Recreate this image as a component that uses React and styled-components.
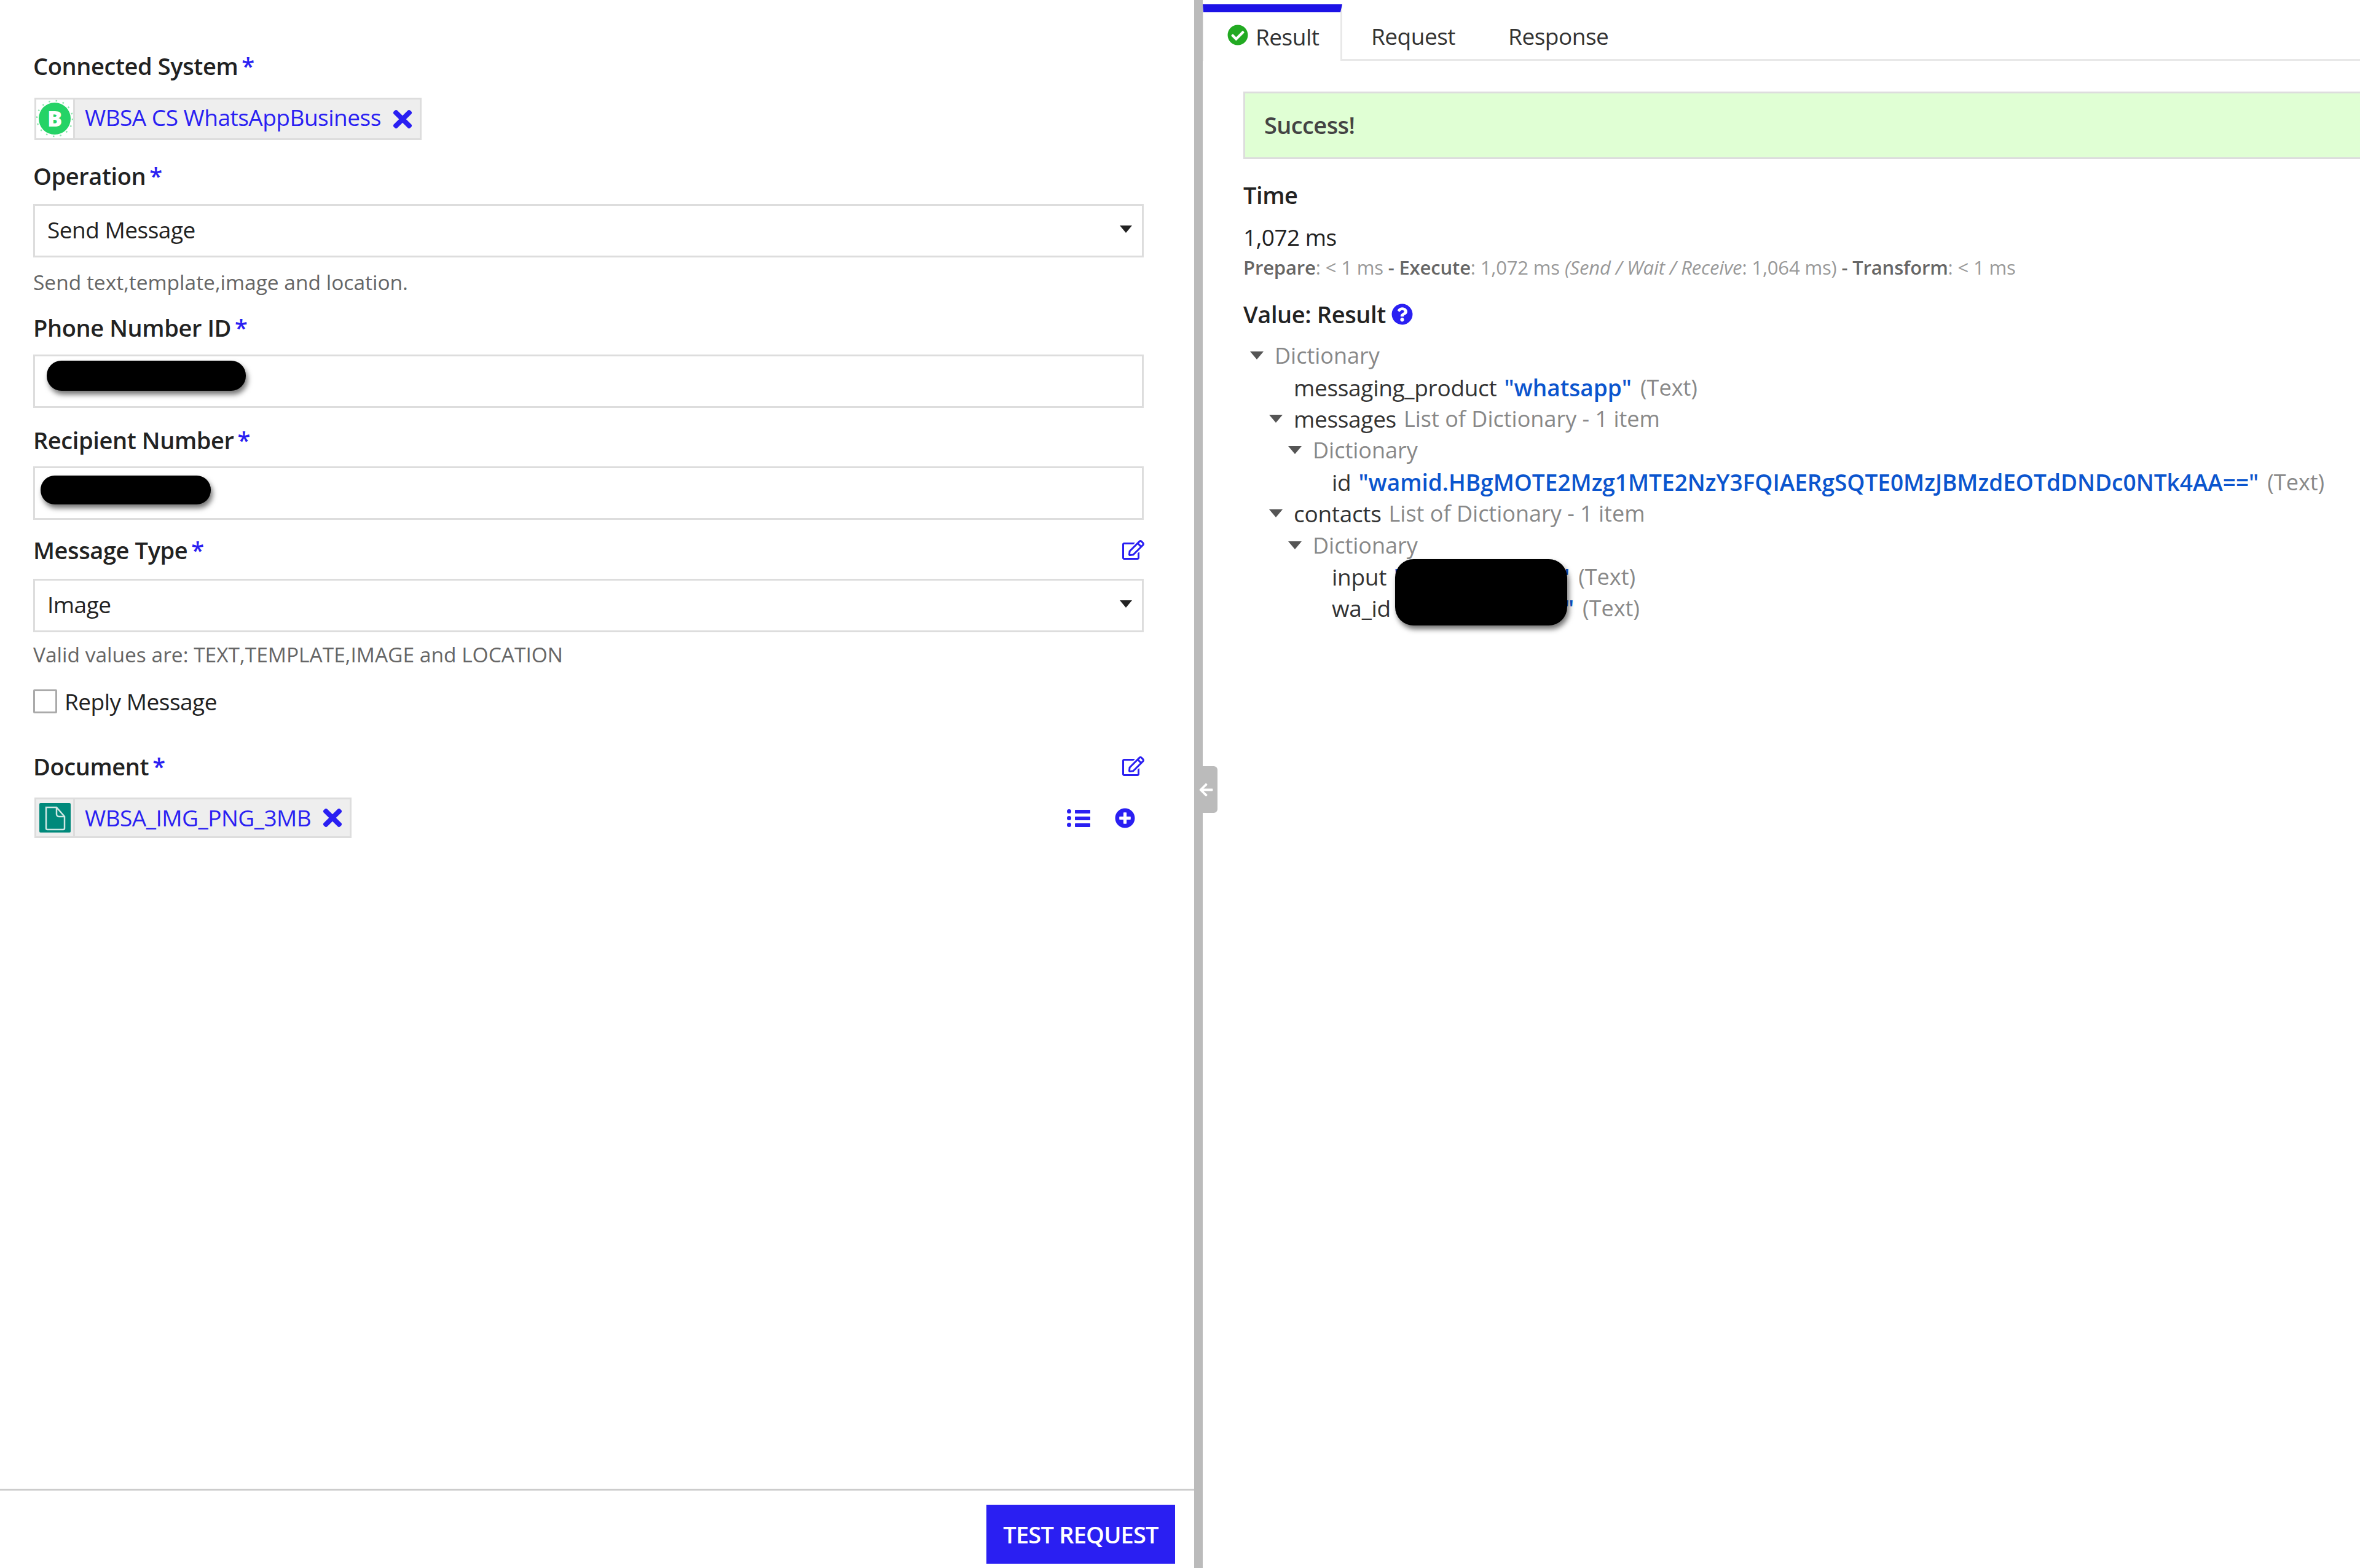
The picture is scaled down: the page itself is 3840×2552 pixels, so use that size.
import styled, { createGlobalStyle } from 'styled-components';
import { FaRegEdit, FaPlusCircle, FaTimes, FaCheckCircle, FaQuestionCircle, FaArrowLeft } from 'react-icons/fa';

const BLUE = '#2a1ff2';

const GlobalStyle = createGlobalStyle`
    html, body {
        margin: 0;
        padding: 0;
        background: #ffffff;
    }
    body {
        font-family: "Open Sans", "Noto Sans", "Liberation Sans", sans-serif;
        font-size: 37px;
        letter-spacing: -0.5px;
        color: #222222;
    }
`;

const Page = styled.div`
    display: flex;
    width: 3840px;
    height: 2552px;
    overflow: hidden;
`;

const LeftPane = styled.div`
    display: flex;
    flex-direction: column;
    width: 1943px;
    flex-shrink: 0;
`;

const Form = styled.div`
    flex: 1;
    padding: 82px 82px 0 54px;
`;

const LabelRow = styled.div`
    display: flex;
    align-items: center;
    justify-content: space-between;
    height: 50px;
    margin-top: ${({ $top }) => $top || 0}px;
    margin-right: -1px;
    color: ${BLUE};
`;

const Label = styled.span`
    font-weight: 600;
    font-size: 38px;
    letter-spacing: -0.4px;
    color: #222222;
`;

const Star = styled.span`
    color: ${BLUE};
    margin-left: 6px;
`;

const Chip = styled.div`
    display: flex;
    align-items: center;
    width: fit-content;
    height: ${({ $height }) => $height}px;
    box-sizing: border-box;
    margin-top: ${({ $top }) => $top || 0}px;
    margin-left: 2px;
    background: #eeeeee;
    border: 3px solid #dddddd;
    color: ${BLUE};
`;

const ChipIcon = styled.span`
    display: flex;
    align-items: center;
    justify-content: center;
    width: 60px;
    align-self: stretch;
    background: ${({ $plain }) => ($plain ? '#eeeeee' : '#ffffff')};
    border-right: 3px solid #dddddd;
`;

const ChipText = styled.span`
    margin: 0 13px ${({ $lift }) => $lift}px 16px;
`;

const ChipClose = styled.span`
    display: flex;
    margin-right: 6px;
    font-size: 44px;
`;

const BoxRow = styled.div`
    display: flex;
    align-items: center;
    justify-content: space-between;
    position: relative;
    box-sizing: border-box;
    height: 87px;
    margin-top: ${({ $top }) => $top || 0}px;
    padding: 0 16px 5px 20px;
    border: 3px solid #dddddd;
    background: #ffffff;
`;

const Caret = styled.span`
    display: inline-block;
    width: 0;
    height: 0;
    border-left: ${({ $size }) => $size}px solid transparent;
    border-right: ${({ $size }) => $size}px solid transparent;
    border-top: ${({ $size }) => $size + 2}px solid ${({ $color }) => $color};
`;

const Redaction = styled.span`
    position: absolute;
    left: ${({ $left }) => $left}px;
    top: ${({ $y }) => $y}px;
    width: ${({ $w }) => $w}px;
    height: ${({ $h }) => $h}px;
    background: #000000;
    border-radius: ${({ $r }) => $r}px;
    box-shadow: 3px 6px 8px rgba(0, 0, 0, 0.55);
`;

const Hint = styled.div`
    height: 44px;
    line-height: 44px;
    margin-top: ${({ $top }) => $top || 0}px;
    font-size: 33.5px;
    letter-spacing: 0;
    color: #666666;
`;

const CheckRow = styled.div`
    display: flex;
    align-items: center;
    height: 50px;
    margin-top: 29px;
`;

const CheckBox = styled.span`
    width: 39px;
    height: 39px;
    box-sizing: border-box;
    margin-right: 12px;
    border: 3px solid #aaaaaa;
    border-radius: 2px;
    background: #ffffff;
`;

const DocRow = styled.div`
    display: flex;
    align-items: center;
    justify-content: space-between;
    margin-top: 26px;
    padding-right: 14px;
    color: ${BLUE};
`;

const DocActions = styled.div`
    display: flex;
    align-items: center;
    gap: 40px;
`;

const ActionIcon = styled.span`
    display: flex;
    font-size: ${({ $size }) => $size}px;
`;

const Footer = styled.div`
    display: flex;
    justify-content: flex-end;
    align-items: flex-start;
    height: 129px;
    padding: 23px 31px 0 0;
    box-sizing: border-box;
    border-top: 3px solid #cccccc;
`;

const TestButton = styled.button`
    width: 307px;
    height: 96px;
    padding: 0;
    border: 0;
    background: ${BLUE};
    color: #ffffff;
    font-family: inherit;
    font-weight: 600;
    font-size: 38px;
    letter-spacing: -0.8px;
`;

const Divider = styled.div`
    position: relative;
    width: 14px;
    flex-shrink: 0;
    background: #bbbbbb;
`;

const Handle = styled.div`
    position: absolute;
    left: 14px;
    top: 1247px;
    display: flex;
    align-items: center;
    width: 24px;
    height: 76px;
    background: #bbbbbb;
    border-radius: 0 6px 6px 0;
    color: #ffffff;
    font-size: 25px;
`;

const HandleArrow = styled.span`
    display: flex;
    margin-left: -7px;
`;

const RightPane = styled.div`
    flex: 1;
    min-width: 0;
`;

const TabBar = styled.div`
    display: flex;
    gap: 8px;
    box-sizing: border-box;
    height: 99px;
    padding-top: 7px;
    border-bottom: 3px solid #e8e8e8;
`;

const Tab = styled.div`
    display: flex;
    align-items: center;
    box-sizing: border-box;
    height: ${({ $active }) => ($active ? '92px' : '89px')};
    padding: ${({ $active }) => ($active ? '0 0 0 39px' : '13px 39px 0')};
    width: ${({ $active }) => ($active ? '227px' : 'auto')};
    background: #ffffff;
    border-top: ${({ $active }) => ($active ? `13px solid #1c12e6` : '0')};
    border-left: ${({ $active }) => ($active ? '1px solid #e8e8e8' : '0')};
    border-right: ${({ $active }) => ($active ? '3px solid #e8e8e8' : '0')};
    color: #333333;
`;

const TabIcon = styled.span`
    display: flex;
    margin: -6px 12px 0 0;
    font-size: 34px;
    color: #22aa22;
`;

const Content = styled.div`
    padding-left: 66px;
`;

const Banner = styled.div`
    display: flex;
    align-items: center;
    box-sizing: border-box;
    height: 110px;
    margin-top: 50px;
    padding: 0 0 2px 31px;
    background: #e0ffd4;
    border: 3px solid #dddddd;
    border-right: 0;
    font-weight: 600;
    font-size: 38px;
    letter-spacing: -0.6px;
    color: #444444;
`;

const Heading = styled.div`
    display: flex;
    align-items: center;
    height: 50px;
    margin-top: ${({ $top }) => $top}px;
    font-weight: 600;
    font-size: 38px;
    letter-spacing: -0.4px;
`;

const HelpIcon = styled.span`
    display: flex;
    margin-left: 9px;
    font-size: 35px;
    color: ${BLUE};
`;

const Metric = styled.div`
    height: 50px;
    line-height: 50px;
    margin-top: 19px;
`;

const Timing = styled.div`
    height: 40px;
    line-height: 40px;
    margin-top: 4px;
    font-size: 31px;
    letter-spacing: -0.15px;
    color: #999999;
`;

const TimingKey = styled.b`
    font-weight: 600;
    color: #666666;
`;

const Tree = styled.div`
    position: relative;
    margin-top: 17px;
`;

const TreeRow = styled.div`
    display: flex;
    align-items: center;
    height: 51.4px;
    padding-left: ${({ $level }) => 11 + $level * 31}px;
    font-size: 36px;
    letter-spacing: 0;
    white-space: nowrap;
`;

const Twisty = styled.span`
    display: flex;
    flex-shrink: 0;
    width: 40px;
`;

const Muted = styled.span`
    color: #888888;
`;

const Key = styled.span`
    font-size: 37px;
    letter-spacing: -0.3px;
    color: #333333;
    margin-right: 12px;
`;

const Value = styled.span`
    font-size: 37px;
    font-weight: 600;
    color: #0b55ce;
    margin-right: 14px;
`;

function Required() {
    return <Star>*</Star>;
}

function WhatsAppLogo() {
    return (
        <svg width="60" height="63" viewBox="0 0 60 63">
            <circle cx="30" cy="31" r="29" fill="none" stroke="#8fe6ae" strokeWidth="2.5" strokeDasharray="2.5 9" />
            <circle cx="30" cy="31" r="26" fill="#25d366" />
            <text x="30" y="44" textAnchor="middle" fontFamily="Open Sans" fontWeight="800" fontSize="36" fill="#ffffff">B</text>
        </svg>
    );
}

function DocumentLogo() {
    return (
        <svg width="51" height="48" viewBox="0 0 51 48">
            <rect width="51" height="48" rx="2" fill="#00897b" />
            <path d="M11 7h17l13 15v19a2 2 0 0 1-2 2H13a2 2 0 0 1-2-2zM28 7v11a4 4 0 0 0 4 4h9" fill="none" stroke="#cfe8e4" strokeWidth="2.5" />
        </svg>
    );
}

function ListIcon() {
    return (
        <svg width="38" height="29" viewBox="0 0 38 29" fill="currentColor">
            <circle cx="3.5" cy="3.5" r="3.5" />
            <circle cx="3.5" cy="14.5" r="3.5" />
            <circle cx="3.5" cy="25.5" r="3.5" />
            <rect x="13" y="1" width="25" height="6" rx="1" />
            <rect x="13" y="12" width="25" height="6" rx="1" />
            <rect x="13" y="23" width="25" height="6" rx="1" />
        </svg>
    );
}

function Row({ level, open, children }) {
    return (
        <TreeRow $level={level}>
            <Twisty>{open && <Caret $size={11} $color="#555555" />}</Twisty>
            {children}
        </TreeRow>
    );
}

export default function App() {
    return (
        <Page>
            <GlobalStyle />
            <LeftPane>
                <Form>
                    <LabelRow>
                        <Label>Connected System<Required /></Label>
                    </LabelRow>
                    <Chip $height={69} $top={27}>
                        <ChipIcon><WhatsAppLogo /></ChipIcon>
                        <ChipText $lift={7}>WBSA CS WhatsAppBusiness</ChipText>
                        <ChipClose><FaTimes /></ChipClose>
                    </Chip>
                    <LabelRow $top={33}>
                        <Label>Operation<Required /></Label>
                    </LabelRow>
                    <BoxRow $top={21}>
                        Send Message
                        <Caret $size={10} $color="#222222" />
                    </BoxRow>
                    <Hint $top={18}>Send text,template,image and location.</Hint>
                    <LabelRow $top={27}>
                        <Label>Phone Number ID<Required /></Label>
                    </LabelRow>
                    <BoxRow $top={19}>
                        <Redaction $left={19} $y={7} $w={324} $h={49} $r={24} />
                    </BoxRow>
                    <LabelRow $top={27}>
                        <Label>Recipient Number<Required /></Label>
                    </LabelRow>
                    <BoxRow $top={18}>
                        <Redaction $left={9} $y={12} $w={277} $h={47} $r={23} />
                    </BoxRow>
                    <LabelRow $top={24}>
                        <Label>Message Type<Required /></Label>
                        <ActionIcon $size={36}><FaRegEdit /></ActionIcon>
                    </LabelRow>
                    <BoxRow $top={22}>
                        Image
                        <Caret $size={10} $color="#222222" />
                    </BoxRow>
                    <Hint $top={14}>Valid values are: TEXT,TEMPLATE,IMAGE and LOCATION</Hint>
                    <CheckRow>
                        <CheckBox />
                        Reply Message
                    </CheckRow>
                    <LabelRow $top={56}>
                        <Label>Document<Required /></Label>
                        <ActionIcon $size={36}><FaRegEdit /></ActionIcon>
                    </LabelRow>
                    <DocRow>
                        <Chip $height={66}>
                            <ChipIcon $plain><DocumentLogo /></ChipIcon>
                            <ChipText $lift={2}>WBSA_IMG_PNG_3MB</ChipText>
                            <ChipClose><FaTimes /></ChipClose>
                        </Chip>
                        <DocActions>
                            <ActionIcon><ListIcon /></ActionIcon>
                            <ActionIcon $size={33}><FaPlusCircle /></ActionIcon>
                        </DocActions>
                    </DocRow>
                </Form>
                <Footer>
                    <TestButton>TEST REQUEST</TestButton>
                </Footer>
            </LeftPane>
            <Divider>
                <Handle>
                    <HandleArrow><FaArrowLeft /></HandleArrow>
                </Handle>
            </Divider>
            <RightPane>
                <TabBar>
                    <Tab $active>
                        <TabIcon><FaCheckCircle /></TabIcon>
                        Result
                    </Tab>
                    <Tab>Request</Tab>
                    <Tab>Response</Tab>
                </TabBar>
                <Content>
                    <Banner>Success!</Banner>
                    <Heading $top={33}>Time</Heading>
                    <Metric>1,072 ms</Metric>
                    <Timing>
                        <TimingKey>Prepare</TimingKey>: &lt; 1 ms <TimingKey>- Execute</TimingKey>: 1,072 ms <i>(Send / Wait / Receive</i>: 1,064 ms) <TimingKey>- Transform</TimingKey>: &lt; 1 ms
                    </Timing>
                    <Heading $top={31}>
                        Value: Result
                        <HelpIcon><FaQuestionCircle /></HelpIcon>
                    </Heading>
                    <Tree>
                        <Row level={0} open><Muted>Dictionary</Muted></Row>
                        <Row level={1}><Key>messaging_product</Key><Value>"whatsapp"</Value><Muted>(Text)</Muted></Row>
                        <Row level={1} open><Key>messages</Key><Muted>List of Dictionary - 1 item</Muted></Row>
                        <Row level={2} open><Muted>Dictionary</Muted></Row>
                        <Row level={3}><Key>id</Key><Value>"wamid.HBgMOTE2Mzg1MTE2NzY3FQIAERgSQTE0MzJBMzdEOTdDNDc0NTk4AA=="</Value><Muted>(Text)</Muted></Row>
                        <Row level={1} open><Key>contacts</Key><Muted>List of Dictionary - 1 item</Muted></Row>
                        <Row level={2} open><Muted>Dictionary</Muted></Row>
                        <Row level={3}><Key>input</Key><Value>"000000000000"</Value><Muted>(Text)</Muted></Row>
                        <Row level={3}><Key>wa_id</Key><Value>"000000000000"</Value><Muted>(Text)</Muted></Row>
                        <Redaction $left={247} $y={357} $w={280} $h={108} $r={30} />
                    </Tree>
                </Content>
            </RightPane>
        </Page>
    );
}
